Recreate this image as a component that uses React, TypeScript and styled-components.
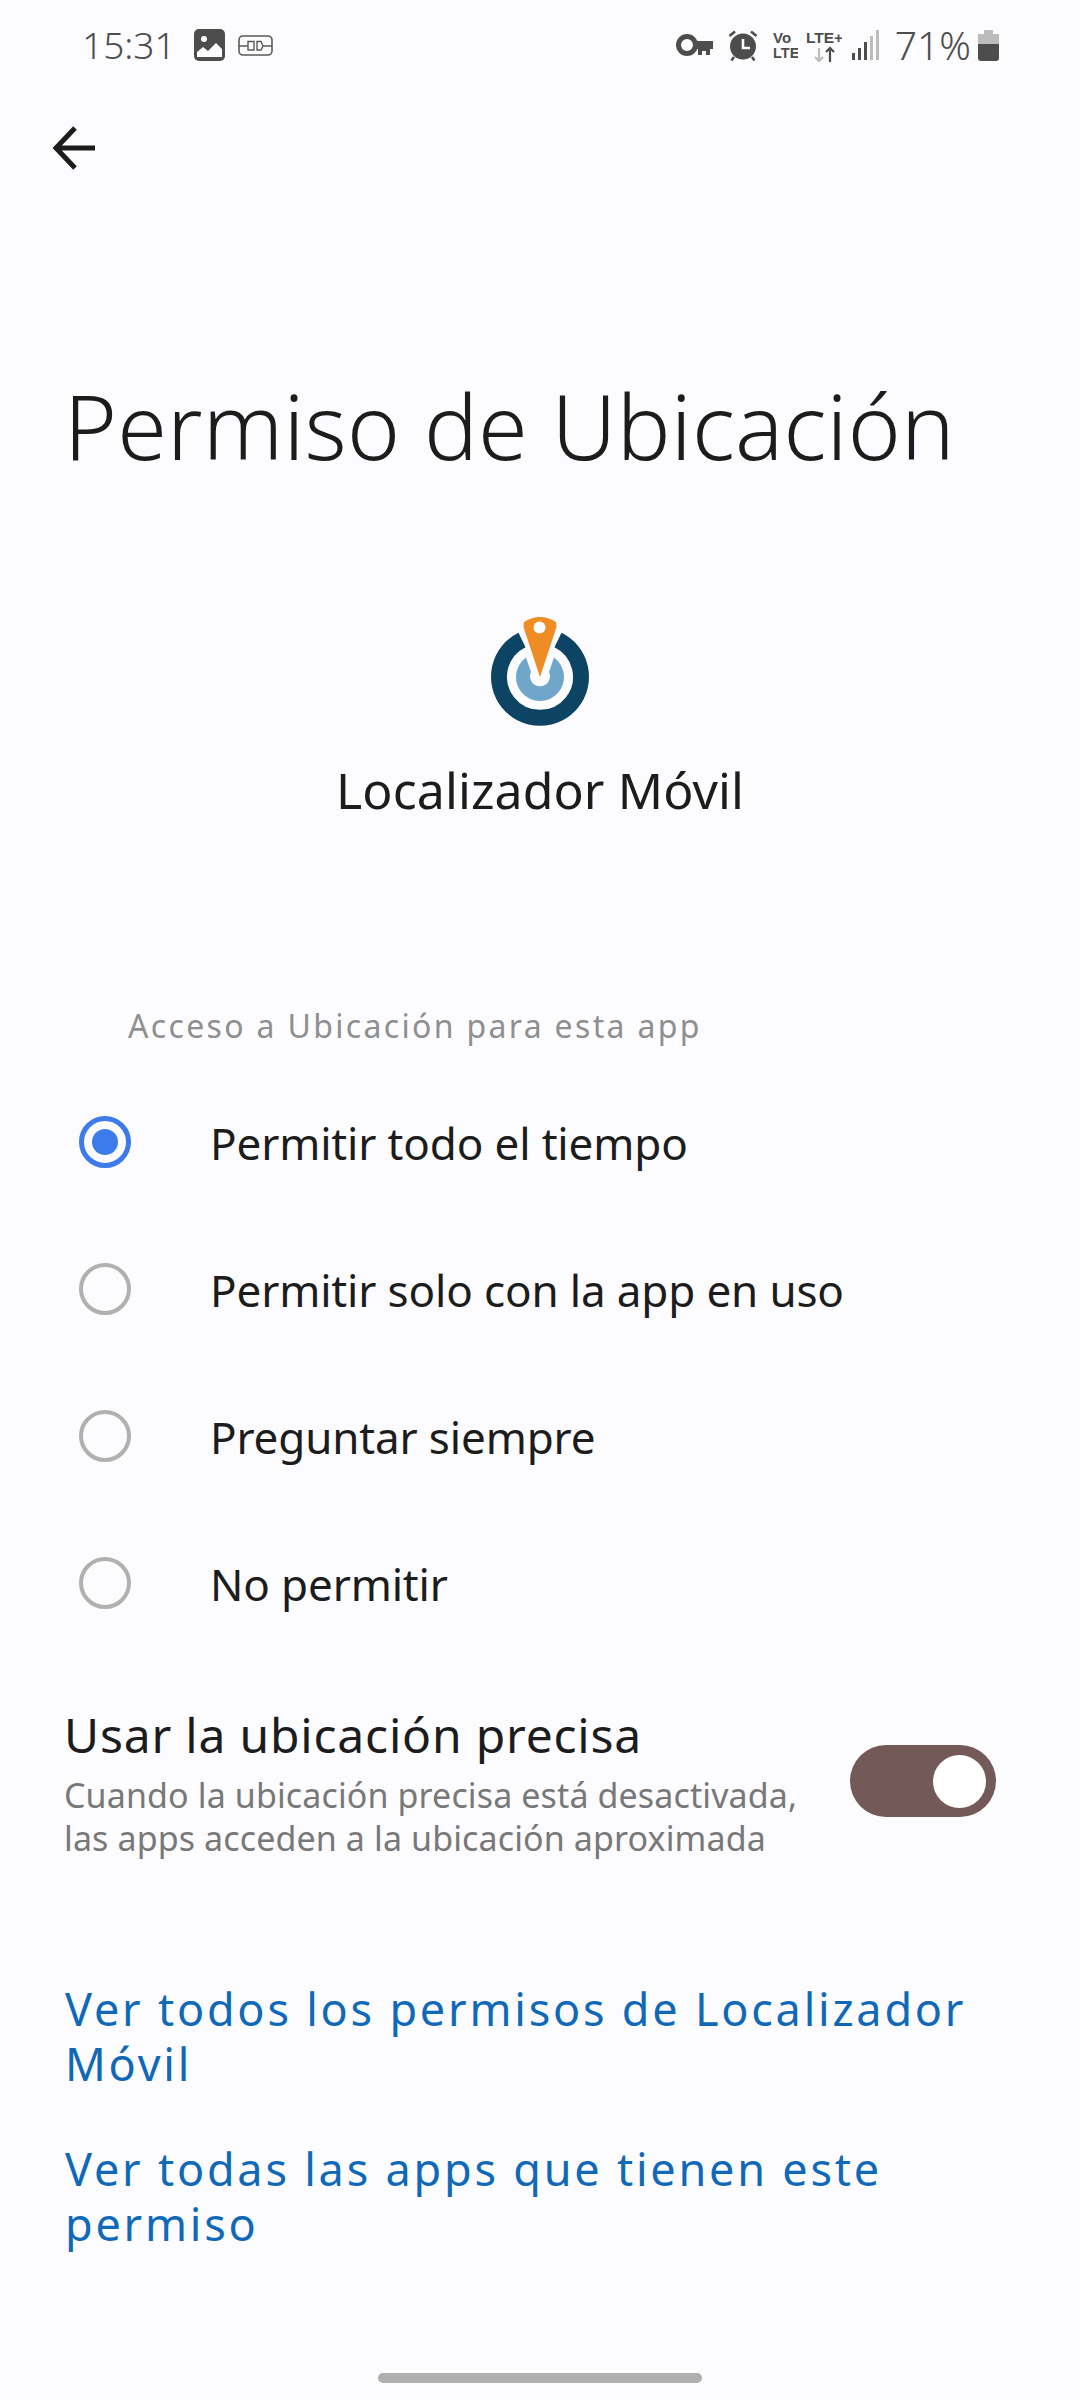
import { createGlobalStyle, styled } from "styled-components";

const GlobalStyle = createGlobalStyle`
  html, body {
    margin: 0;
    padding: 0;
    background-color: #fcfcff;
  }
  * {
    box-sizing: border-box;
  }
`;

const Screen = styled.main`
  background-color: #fcfcff;
  color: #1c1c1c;
  display: flex;
  flex-direction: column;
  font-family: "Noto Sans", "Open Sans", sans-serif;
  height: 2400px;
  width: 1080px;
  overflow: hidden;
`;

const StatusBar = styled.header`
  display: flex;
  align-items: center;
  justify-content: space-between;
  height: 90px;
  padding: 0 81px 0 82px;
`;

const StatusGroup = styled.div`
  display: flex;
  align-items: center;
`;

const StatusText = styled.span<{ $gap?: number; $size?: number }>`
  color: #4d4d4d;
  font-size: ${(p) => p.$size ?? 37}px;
  font-weight: 300;
  line-height: 90px;
  margin-left: ${(p) => p.$gap ?? 0}px;
`;

const StatusIcon = styled.svg<{ $gap: number }>`
  display: block;
  margin-left: ${(p) => p.$gap}px;
`;

const BackButton = styled.button`
  align-self: flex-start;
  background: none;
  border: 0;
  display: flex;
  height: 60px;
  margin: 29px 0 0 42px;
  padding: 0;
  width: 60px;
`;

const Title = styled.h1`
  font-size: 90px;
  font-weight: 300;
  letter-spacing: 0.2px;
  line-height: 120px;
  margin: 186px 0 0;
  padding-left: 64px;
  white-space: nowrap;
`;

const AppBlock = styled.section`
  display: flex;
  flex-direction: column;
  align-items: center;
  margin-top: 130px;
`;

const AppName = styled.div`
  font-size: 50px;
  letter-spacing: 0.1px;
  line-height: 70px;
  margin-top: 28px;
`;

const SectionLabel = styled.div`
  color: #8f8f8f;
  font-size: 32px;
  letter-spacing: 2.33px;
  line-height: 44px;
  margin-top: 179px;
  padding-left: 128px;
`;

const Options = styled.ul`
  list-style: none;
  margin: 20px 0 0;
  padding: 0;
`;

const Option = styled.li`
  display: flex;
  align-items: center;
  height: 147px;
  padding-left: 79px;
`;

const Radio = styled.span<{ $on?: boolean }>`
  display: flex;
  align-items: center;
  justify-content: center;
  border: ${(p) => (p.$on ? "5px solid #3e7bea" : "4px solid #b0b0b0")};
  border-radius: 50%;
  height: 52px;
  width: 52px;
  &::after {
    background-color: #3e7bea;
    border-radius: 50%;
    content: "";
    display: ${(p) => (p.$on ? "block" : "none")};
    height: 26px;
    width: 26px;
  }
`;

const OptionText = styled.span`
  font-size: 44px;
  letter-spacing: -0.15px;
  margin: 3px 0 0 79px;
`;

const PreciseRow = styled.section`
  display: flex;
  align-items: center;
  justify-content: space-between;
  margin-top: 46px;
  padding: 0 84px 0 64px;
`;

const PreciseTitle = styled.div`
  font-size: 48px;
  letter-spacing: 0.8px;
  line-height: 66px;
  margin-bottom: 6px;
`;

const PreciseHint = styled.div`
  color: #787878;
  font-size: 34px;
  letter-spacing: 0.12px;
  line-height: 43px;
`;

const Toggle = styled.span`
  background-color: #735a58;
  border-radius: 36px;
  display: flex;
  align-items: center;
  justify-content: flex-end;
  height: 72px;
  padding-right: 10px;
  width: 146px;
  &::after {
    background-color: #fff;
    border-radius: 50%;
    content: "";
    height: 53px;
    width: 53px;
  }
`;

const Links = styled.nav`
  display: flex;
  flex-direction: column;
  gap: 50px;
  margin-top: 121px;
  padding: 0 64px 0 65px;
`;

const LinkText = styled.a`
  color: #1069b8;
  font-size: 45px;
  letter-spacing: 2.78px;
  line-height: 55px;
`;

const HomeBar = styled.div`
  align-self: center;
  background-color: #b0b0b0;
  border-radius: 5px;
  height: 10px;
  margin-top: auto;
  margin-bottom: 17px;
  width: 324px;
`;

function Logo() {
  return (
    <svg width="100" height="112" viewBox="0 0 100 112">
      <path
        d="M32 25 A41 41 0 1 0 68 25"
        fill="none"
        stroke="#0d4463"
        strokeWidth="16"
      />
      <path
        d="M36 42.5 A24 24 0 1 0 64 42.5 L59 57 A10 10 0 1 1 41 57 Z"
        fill="#6fa6c9"
      />
      <path
        d="M34 7 Q50 -3 66 7 L66.5 12 L50 62 L33.5 12 Z"
        fill="#f08c24"
      />
      <circle cx="49.5" cy="12.5" r="6" fill="#fcfcff" />
    </svg>
  );
}

export default function App() {
  return (
    <>
      <GlobalStyle />
      <Screen>
        <StatusBar>
          <StatusGroup>
            <StatusText>15:31</StatusText>
            <StatusIcon $gap={18} width="31" height="32" viewBox="0 0 31 32">
              <rect width="31" height="32" rx="5" fill="#4d4d4d" />
              <circle cx="10" cy="10" r="3" fill="#fcfcff" />
              <path d="M3 28 V23 L9 18 L14 22 L22 14 L28 20 V28 Z" fill="#fcfcff" />
            </StatusIcon>
            <StatusIcon $gap={13} width="35" height="21" viewBox="0 0 35 21">
              <rect x="1" y="1" width="33" height="19" rx="4" fill="none" stroke="#5a5a5a" strokeWidth="1.6" />
              <path
                d="M1 11 H10 M25 11 H34 M10 6.5 H16 V15 H10 Z M19 6.5 H23 L25 11 L23 15 H19 Z"
                fill="none"
                stroke="#5a5a5a"
                strokeWidth="1.4"
              />
            </StatusIcon>
          </StatusGroup>
          <StatusGroup>
            <StatusIcon $gap={0} width="37" height="22" viewBox="0 0 37 22">
              <circle cx="11" cy="11" r="8.5" fill="none" stroke="#4d4d4d" strokeWidth="5" />
              <path d="M18 7 H37 V15 H34 V21 H30 V17 H26 V21 H22 V15 H18 Z" fill="#4d4d4d" />
            </StatusIcon>
            <StatusIcon $gap={15} width="30" height="31" viewBox="0 0 30 31">
              <circle cx="15" cy="16.5" r="13" fill="#4d4d4d" />
              <path d="M1.5 6 L7 1.5 M28.5 6 L23 1.5 M6 27 L3.5 30.5 M24 27 L26.5 30.5" stroke="#4d4d4d" strokeWidth="2.6" />
              <path d="M15 9 V18 H22" fill="none" stroke="#fcfcff" strokeWidth="2.6" />
            </StatusIcon>
            <StatusIcon $gap={15} width="25" height="30" viewBox="0 0 25 30">
              <text x="0" y="13" fontSize="15" fontWeight="700" fill="#4d4d4d" fontFamily="Liberation Sans Narrow, Liberation Sans">
                Vo
              </text>
              <text x="0" y="28" fontSize="14.5" fontWeight="700" fill="#4d4d4d" fontFamily="Liberation Sans Narrow, Liberation Sans">
                LTE
              </text>
            </StatusIcon>
            <StatusIcon $gap={8} width="36" height="33" viewBox="0 0 36 33">
              <text x="0" y="14" fontSize="15.5" fontWeight="700" fill="#4d4d4d" fontFamily="Liberation Sans">
                LTE+
              </text>
              <path d="M13 19 V32 M9 28 L13 32 L17 28" fill="none" stroke="#bcbcbc" strokeWidth="2.2" />
              <path d="M24 33 V19 M20 23 L24 19 L28 23" fill="none" stroke="#4d4d4d" strokeWidth="2.2" />
            </StatusIcon>
            <StatusIcon $gap={10} width="27" height="30" viewBox="0 0 27 30">
              <rect x="0" y="23" width="3" height="7" fill="#4d4d4d" />
              <rect x="6" y="18" width="3" height="12" fill="#4d4d4d" />
              <rect x="12" y="12" width="3" height="18" fill="#4d4d4d" />
              <rect x="18" y="6" width="3" height="24" fill="#bcbcbc" />
              <rect x="24" y="0" width="3" height="30" fill="#bcbcbc" />
            </StatusIcon>
            <StatusText $gap={16} $size={39}>71%</StatusText>
            <StatusIcon $gap={7} width="21" height="31" viewBox="0 0 21 31">
              <path d="M6 0 H15 V4 H21 V14 H0 V4 H6 Z" fill="#bcbcbc" />
              <path d="M0 14 H21 V28 Q21 31 18 31 H3 Q0 31 0 28 Z" fill="#4d4d4d" />
            </StatusIcon>
          </StatusGroup>
        </StatusBar>

        <BackButton aria-label="Volver">
          <svg width="60" height="60" viewBox="0 0 60 60">
            <path d="M14 29 H53 M33 9 L14 29 L33 49" fill="none" stroke="#1c1c1c" strokeWidth="5" />
          </svg>
        </BackButton>

        <Title>Permiso de Ubicación</Title>

        <AppBlock>
          <Logo />
          <AppName>Localizador Móvil</AppName>
        </AppBlock>

        <SectionLabel>Acceso a Ubicación para esta app</SectionLabel>

        <Options>
          <Option>
            <Radio $on />
            <OptionText>Permitir todo el tiempo</OptionText>
          </Option>
          <Option>
            <Radio />
            <OptionText>Permitir solo con la app en uso</OptionText>
          </Option>
          <Option>
            <Radio />
            <OptionText>Preguntar siempre</OptionText>
          </Option>
          <Option>
            <Radio />
            <OptionText>No permitir</OptionText>
          </Option>
        </Options>

        <PreciseRow>
          <div>
            <PreciseTitle>Usar la ubicación precisa</PreciseTitle>
            <PreciseHint>
              Cuando la ubicación precisa está desactivada,
              <br />
              las apps acceden a la ubicación aproximada
            </PreciseHint>
          </div>
          <Toggle />
        </PreciseRow>

        <Links>
          <LinkText>Ver todos los permisos de Localizador Móvil</LinkText>
          <LinkText>Ver todas las apps que tienen este permiso</LinkText>
        </Links>

        <HomeBar />
      </Screen>
    </>
  );
}
